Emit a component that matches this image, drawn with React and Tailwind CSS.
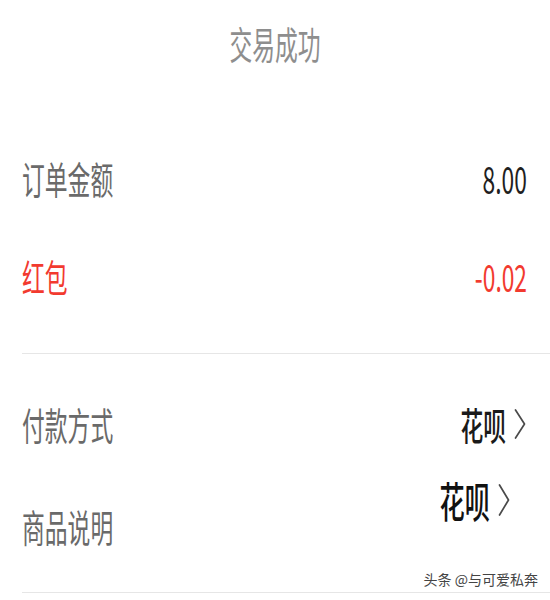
const Chevron = ({ h = 30 }) => (
    <svg width="12" height={h} viewBox={`0 0 12 ${h}`} fill="none" className="shrink-0">
        <polyline
            points={`1.5,1 10.5,${h / 2} 1.5,${h - 1}`}
            stroke="#4a4a4a"
            strokeWidth="1.7"
            strokeLinejoin="round"
            strokeLinecap="round"
        />
    </svg>
);

const Row = ({ label, value, red }) => (
    <div className="h-[98px] flex items-center justify-between">
        <span className={`text-[38px] leading-none origin-left scale-x-[0.6] whitespace-nowrap ${red ? 'text-[#f23a2f]' : 'text-[#6a6a6a]'}`}>
            {label}
        </span>
        <span className={`text-[38px] leading-none origin-right scale-x-[0.6] whitespace-nowrap ${red ? 'text-[#f23a2f]' : 'text-[#1f1f1f]'}`}>
            {value}
        </span>
    </div>
);

export default function App() {
    return (
        <div className="w-[550px] h-[600px] bg-white overflow-hidden font-['Noto_Sans_CJK_SC',sans-serif]">
            <div className="h-[86px] flex items-center justify-center">
                <span className="text-[38px] leading-none text-[#8e8e8e] scale-x-[0.6] whitespace-nowrap">交易成功</span>
            </div>

            <div className="mt-[43px] pl-[22px] pr-[23px]">
                <Row label="订单金额" value="8.00" />
                <Row label="红包" value="-0.02" red />
            </div>

            <div className="ml-[22px] mt-[28px] h-px bg-[#e6e6e6]" />

            <div className="mt-[21px] h-[98px] flex items-center justify-between pl-[22px] pr-[24px]">
                <span className="text-[38px] leading-none text-[#6a6a6a] origin-left scale-x-[0.6] whitespace-nowrap">付款方式</span>
                <div className="flex items-center">
                    <span className="text-[38px] leading-none text-[#1a1a1a] font-medium origin-right scale-x-[0.6] whitespace-nowrap">花呗</span>
                    <span className="ml-[8px]"><Chevron h={30} /></span>
                </div>
            </div>

            <div className="mt-[9px] h-[88px] flex justify-between pl-[22px] pr-[40px]">
                <span className="self-center text-[38px] leading-none text-[#6a6a6a] origin-left scale-x-[0.6] whitespace-nowrap">商品说明</span>
                <div className="self-start -mt-[3px] flex items-center">
                    <span className="text-[42px] leading-none text-[#111] font-medium origin-right scale-x-[0.6] whitespace-nowrap">花呗</span>
                    <span className="ml-[8px]"><Chevron h={32} /></span>
                </div>
            </div>

            <div className="mt-[0px] h-[18px] flex justify-end pr-[12px]">
                <span className="text-[14px] leading-[18px] text-[#444]">头条 @与可爱私奔</span>
            </div>

            <div className="ml-[22px] mt-[4px] h-px bg-[#e6e6e6]" />
        </div>
    );
}
